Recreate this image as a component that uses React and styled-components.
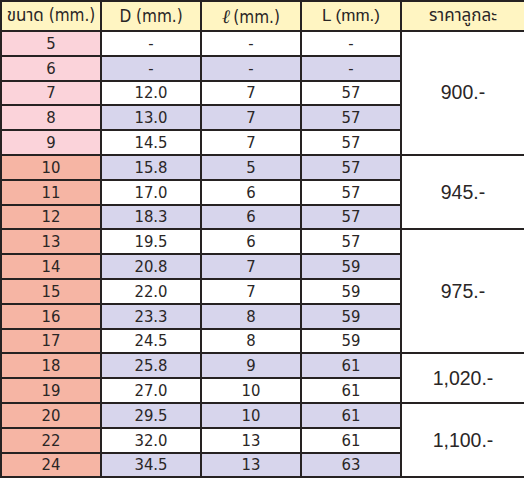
import React from "react";
import styled, { createGlobalStyle } from "styled-components";

const Global = createGlobalStyle`
  html, body { margin: 0; padding: 0; background: #ffffff; }
`;

const LINE = "2px solid #262222";
const TAHOMA = `"DejaVu Sans Condensed", "DejaVu Sans", "Noto Sans Thai", "Noto Sans", sans-serif`;
const ARIAL = `"Liberation Sans", Arial, "Noto Sans Thai", "Noto Sans", sans-serif`;

const Table = styled.table`
  border-collapse: collapse;
  table-layout: fixed;
  width: 524px;
  margin: 0;
  color: #2a2626;
  font-family: ${TAHOMA};
`;

const HeadRow = styled.tr`
  height: 30px;
`;

const HeadCell = styled.th`
  background: #fff5c2;
  border: ${LINE};
  font-weight: normal;
  font-size: 17px;
  font-family: ${(p) => (p.$arial ? ARIAL : TAHOMA)};
  padding: 0;
  text-align: center;
  white-space: nowrap;
`;

const Ell = styled.span`
  font-family: "DejaVu Serif", serif;
  font-style: italic;
  font-weight: bold;
  font-size: 19px;
  margin-right: 3px;
`;

const BodyRow = styled.tr`
  height: 24.8px;
`;

const SizeCell = styled.td`
  background: ${(p) => (p.$tone === "salmon" ? "#f6b5a4" : "#fbd3da")};
  border: ${LINE};
  text-align: center;
  font-size: 16.5px;
  padding: 0;
`;

const DataCell = styled.td`
  background: ${(p) => (p.$shade ? "#d7d5ec" : "#ffffff")};
  border: ${LINE};
  text-align: center;
  font-size: 16.5px;
  padding: 0;
`;

const PriceCell = styled.td`
  background: #ffffff;
  border: ${LINE};
  text-align: center;
  font-family: ${ARIAL};
  font-size: 19.5px;
  padding: 0;
`;

const rows = [
  { s: "5", d: "-", l: "-", L: "-" },
  { s: "6", d: "-", l: "-", L: "-" },
  { s: "7", d: "12.0", l: "7", L: "57" },
  { s: "8", d: "13.0", l: "7", L: "57" },
  { s: "9", d: "14.5", l: "7", L: "57" },
  { s: "10", d: "15.8", l: "5", L: "57" },
  { s: "11", d: "17.0", l: "6", L: "57" },
  { s: "12", d: "18.3", l: "6", L: "57" },
  { s: "13", d: "19.5", l: "6", L: "57" },
  { s: "14", d: "20.8", l: "7", L: "59" },
  { s: "15", d: "22.0", l: "7", L: "59" },
  { s: "16", d: "23.3", l: "8", L: "59" },
  { s: "17", d: "24.5", l: "8", L: "59" },
  { s: "18", d: "25.8", l: "9", L: "61" },
  { s: "19", d: "27.0", l: "10", L: "61" },
  { s: "20", d: "29.5", l: "10", L: "61" },
  { s: "22", d: "32.0", l: "13", L: "61" },
  { s: "24", d: "34.5", l: "13", L: "63" },
];

const prices = { 0: ["900.-", 5], 5: ["945.-", 3], 8: ["975.-", 5], 13: ["1,020.-", 2], 15: ["1,100.-", 3] };

export default function App() {
  return (
    <>
      <Global />
      <Table>
        <colgroup>
          <col style={{ width: 100 }} />
          <col style={{ width: 100 }} />
          <col style={{ width: 100 }} />
          <col style={{ width: 100 }} />
          <col style={{ width: 124 }} />
        </colgroup>
        <thead>
          <HeadRow>
            <HeadCell>ขนาด (mm.)</HeadCell>
            <HeadCell>D (mm.)</HeadCell>
            <HeadCell><Ell>ℓ</Ell>(mm.)</HeadCell>
            <HeadCell $arial>L (mm.)</HeadCell>
            <HeadCell $arial>ราคาลูกละ</HeadCell>
          </HeadRow>
        </thead>
        <tbody>
          {rows.map((r, i) => (
            <BodyRow key={r.s}>
              <SizeCell $tone={i < 5 ? "pink" : "salmon"}>{r.s}</SizeCell>
              <DataCell $shade={i % 2 === 1}>{r.d}</DataCell>
              <DataCell $shade={i % 2 === 1}>{r.l}</DataCell>
              <DataCell $shade={i % 2 === 1}>{r.L}</DataCell>
              {prices[i] && <PriceCell rowSpan={prices[i][1]}>{prices[i][0]}</PriceCell>}
            </BodyRow>
          ))}
        </tbody>
      </Table>
    </>
  );
}
